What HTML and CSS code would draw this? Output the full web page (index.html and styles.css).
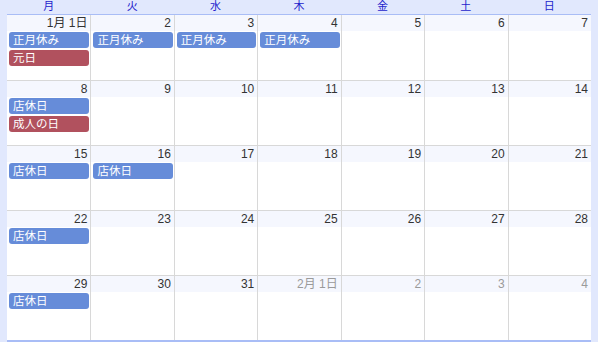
FILE: index.html
```html
<!DOCTYPE html>
<html lang="ja">
<head>
<meta charset="utf-8">
<link rel="stylesheet" href="styles.css">
</head>
<body>
<div class="cal">
  <div class="head">
    <div>月</div><div>火</div><div>水</div><div>木</div><div>金</div><div>土</div><div>日</div>
  </div>
  <div class="weeks">
    <div class="week">
      <div class="day"><div class="num">1月 1日</div><div class="ev blue">正月休み</div><div class="ev red">元日</div></div>
      <div class="day"><div class="num">2</div><div class="ev blue">正月休み</div></div>
      <div class="day"><div class="num">3</div><div class="ev blue">正月休み</div></div>
      <div class="day"><div class="num">4</div><div class="ev blue">正月休み</div></div>
      <div class="day"><div class="num">5</div></div>
      <div class="day"><div class="num">6</div></div>
      <div class="day"><div class="num">7</div></div>
    </div>
    <div class="week">
      <div class="day"><div class="num">8</div><div class="ev blue">店休日</div><div class="ev red">成人の日</div></div>
      <div class="day"><div class="num">9</div></div>
      <div class="day"><div class="num">10</div></div>
      <div class="day"><div class="num">11</div></div>
      <div class="day"><div class="num">12</div></div>
      <div class="day"><div class="num">13</div></div>
      <div class="day"><div class="num">14</div></div>
    </div>
    <div class="week">
      <div class="day"><div class="num">15</div><div class="ev blue">店休日</div></div>
      <div class="day"><div class="num">16</div><div class="ev blue">店休日</div></div>
      <div class="day"><div class="num">17</div></div>
      <div class="day"><div class="num">18</div></div>
      <div class="day"><div class="num">19</div></div>
      <div class="day"><div class="num">20</div></div>
      <div class="day"><div class="num">21</div></div>
    </div>
    <div class="week">
      <div class="day"><div class="num">22</div><div class="ev blue">店休日</div></div>
      <div class="day"><div class="num">23</div></div>
      <div class="day"><div class="num">24</div></div>
      <div class="day"><div class="num">25</div></div>
      <div class="day"><div class="num">26</div></div>
      <div class="day"><div class="num">27</div></div>
      <div class="day"><div class="num">28</div></div>
    </div>
    <div class="week">
      <div class="day"><div class="num">29</div><div class="ev blue">店休日</div></div>
      <div class="day"><div class="num">30</div></div>
      <div class="day"><div class="num">31</div></div>
      <div class="day other"><div class="num">2月 1日</div></div>
      <div class="day other"><div class="num">2</div></div>
      <div class="day other"><div class="num">3</div></div>
      <div class="day other"><div class="num">4</div></div>
    </div>
  </div>
</div>
</body>
</html>
```
FILE: styles.css
```css
html, body {
  margin: 0;
  padding: 0;
  background: #e1e8fd;
}
body {
  width: 598px;
  height: 342px;
  overflow: hidden;
  font-family: "Liberation Sans", "Noto Sans CJK JP", sans-serif;
  font-size: 11px;
}
.cal {
  padding: 0 7px;
}
.head {
  display: grid;
  grid-template-columns: repeat(7, 1fr);
  height: 14px;
  border-bottom: 1px solid #a9bdf6;
}
.head div {
  text-align: center;
  color: #2424cc;
  line-height: 16px;
  font-size: 11px;
  margin-top: -2px;
}
.weeks {
  background: #fff;
  border-bottom: 2px solid #a9bdf6;
}
.week {
  display: grid;
  grid-template-columns: repeat(7, 1fr);
  height: 64px;
  border-top: 1px solid #d8d8d8;
}
.week:first-child {
  border-top: none;
  height: 65px;
}
.day {
  border-left: 1px solid #d8d8d8;
  display: flex;
  flex-direction: column;
  gap: 2px;
}
.day:first-child {
  border-left: none;
}
.num {
  background: #f5f7fe;
  height: 16px;
  line-height: 16px;
  text-align: right;
  padding-right: 3px;
  color: #333;
  font-size: 12px;
  margin-bottom: -1px;
}
.num.cjk, .day:first-child .num {
  font-size: 12px;
}
.other .num {
  color: #9a9a9a;
}
.ev {
  height: 16px;
  line-height: 16px;
  border-radius: 3px;
  color: #fff;
  margin: 0 1px 0 2px;
  padding-left: 4px;
  font-size: 11.5px;
  white-space: nowrap;
  overflow: hidden;
}
.blue {
  background: #668cd9;
}
.red {
  background: #b1515e;
}
```
